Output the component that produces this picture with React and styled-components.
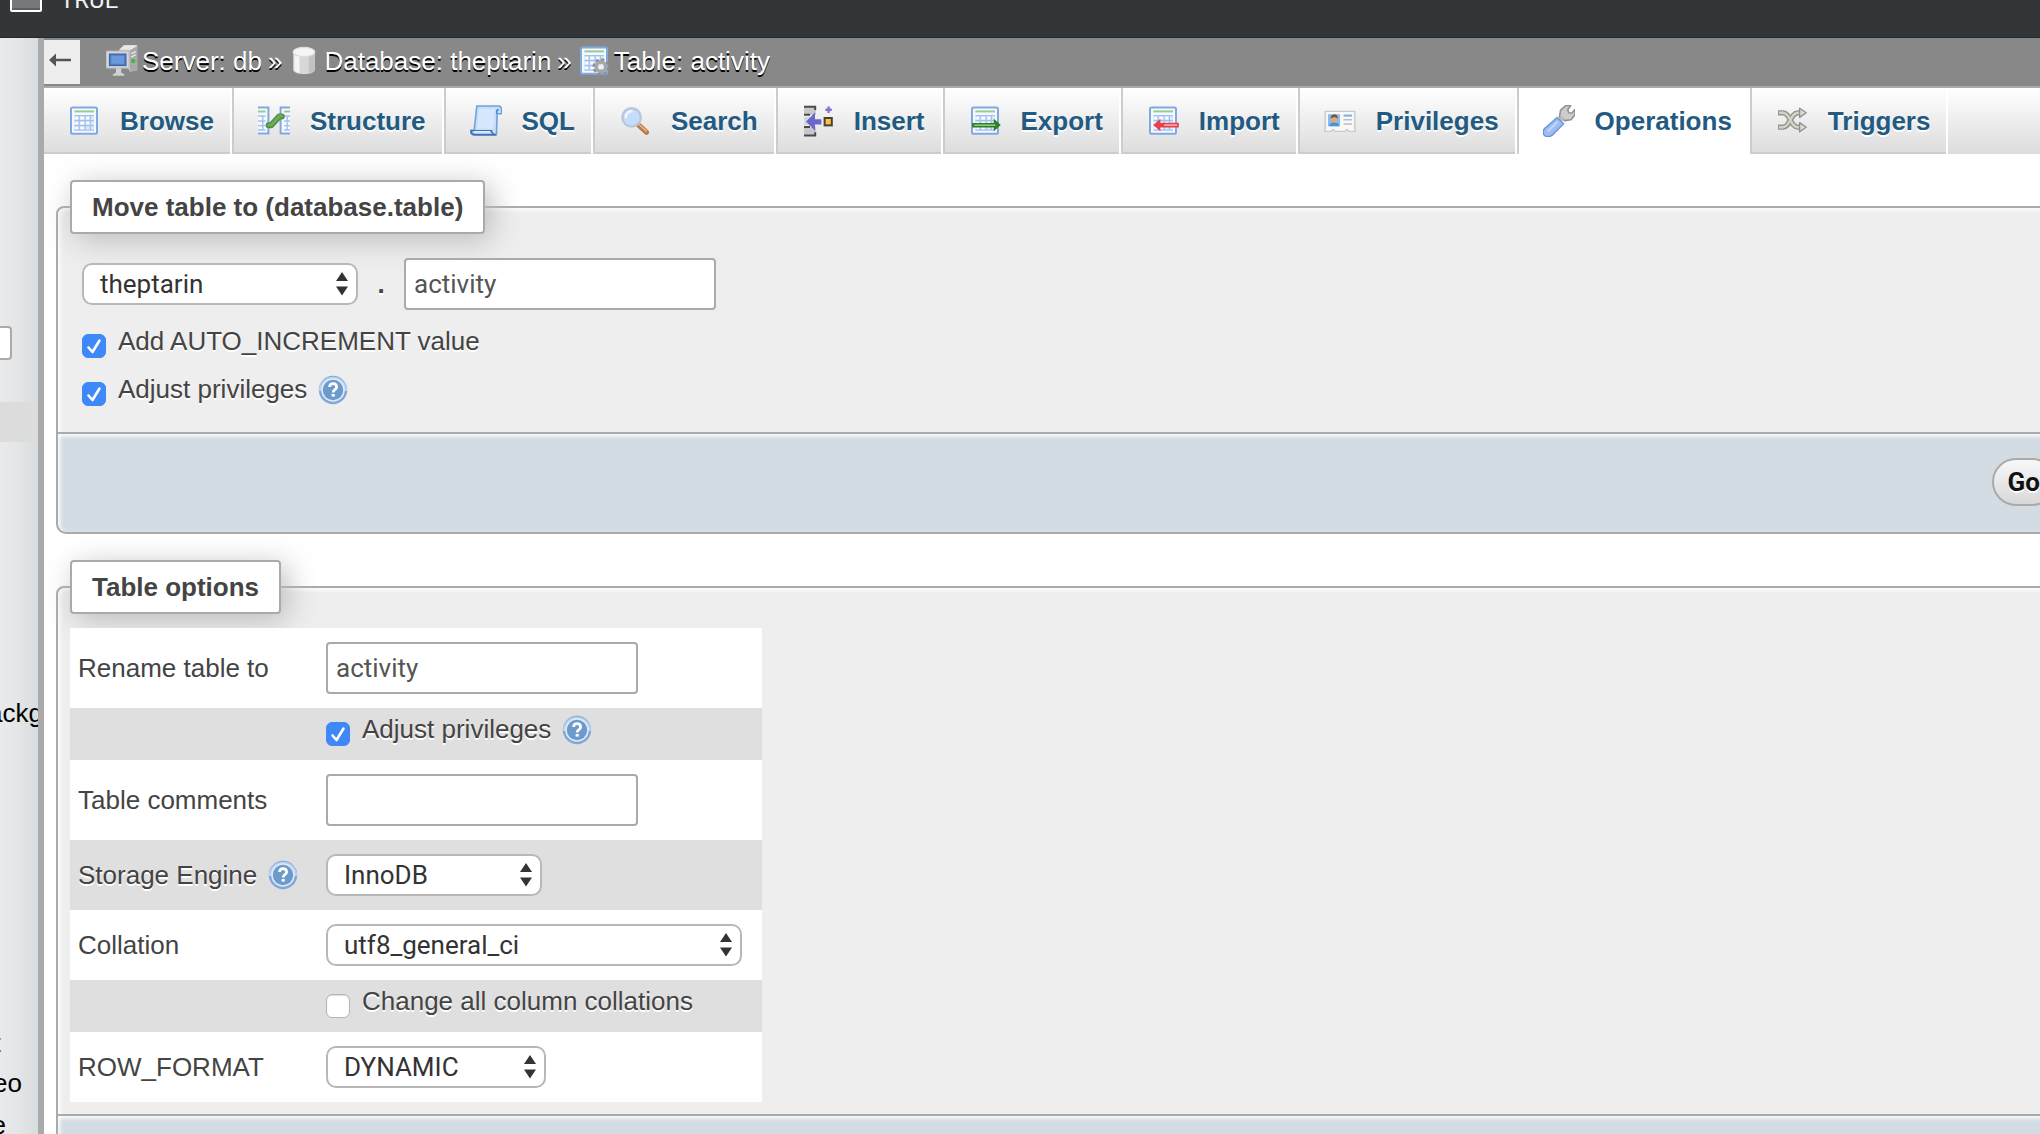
import React, { useState } from "react";
import styled, { createGlobalStyle, css } from "styled-components";

const sans = `"Liberation Sans", Arial, Helvetica, sans-serif`;
const control = `Roboto, "Liberation Sans", Arial, sans-serif`;

const GlobalStyle = createGlobalStyle`
  *, *::before, *::after { box-sizing: border-box; }
  body { margin: 0; background: #fff; color: #444; font: 26px/30px ${sans}; }
`;

const Page = styled.div`
  display: flex;
  flex-direction: column;
  height: 100vh;
  overflow: hidden;
`;

const BookmarksBar = styled.header`
  flex: none;
  display: flex;
  align-items: flex-end;
  height: 38px;
  padding: 0 10px 25px;
  overflow: hidden;
  background: #323639;
  border-bottom: 1px solid #25282a;
`;

const BookmarkLabel = styled.label`
  display: flex;
  align-items: flex-end;
  gap: 18px;
  color: #f1f2f2;
  font: 24px/24px ${control};
`;

const BookmarkBox = styled.input`
  appearance: none;
  flex: none;
  width: 32px;
  height: 32px;
  margin: 0;
  border: 2px solid #fff;
  border-radius: 2px;
  background: linear-gradient(#75797c 26px, #5b5f62 26px);
`;

const Body = styled.div`
  flex: 1;
  display: flex;
  min-height: 0;
`;

const Sidebar = styled.nav`
  flex: none;
  display: flex;
  flex-direction: column;
  width: 44px;
  padding-top: 288px;
  overflow: hidden;
  border-right: 6px solid #aaa;
  background: linear-gradient(to right, #e8eaec, #e3e5e6 50%, #d8dddf);
  color: #000;
`;

const SidebarFilter = styled.input`
  flex: none;
  width: 12px;
  height: 34px;
  padding: 0;
  border: 2px solid #aaa;
  border-left: 0;
  border-radius: 0 4px 4px 0;
  background: #fff;
`;

const SidebarHighlight = styled.div`
  flex: none;
  height: 40px;
  margin: 42px 0 256px;
  background: linear-gradient(to right, #dcdcdc 60%, #dadddf);
`;

const TreeItem = styled.a`
  flex: none;
  display: flex;
  justify-content: ${(p) => (p.$start ? "flex-start" : "flex-end")};
  margin-left: ${(p) => (p.$start ? "-12px" : "-20px")};
  padding-right: ${(p) => p.$end || 0}px;
  margin-bottom: ${(p) => p.$after || 0}px;
  color: ${(p) => (p.$muted ? "#666" : "#000")};
  line-height: 30px;
  text-decoration: none;
`;

const Main = styled.main`
  flex: 1;
  min-width: 0;
  overflow: hidden;
`;

const Breadcrumb = styled.div`
  display: flex;
  align-items: center;
  height: 50px;
  padding-bottom: 2px;
  background: #888;
  border-bottom: 2px solid #aaa;
  color: #fff;
  text-shadow: 0 2px 0 #000;
`;

const BackButton = styled.button`
  display: flex;
  align-items: center;
  justify-content: center;
  width: 36px;
  height: 44px;
  margin: 2px 26px 0 0;
  padding: 0 4px 4px 0;
  border: 0;
  background: #eee;
`;

const Crumb = styled.a`
  display: flex;
  align-items: center;
  gap: 4px;
  color: inherit;
  text-decoration: none;
`;

const Separator = styled.span`
  margin: 0 6px;
`;

const Icon = styled.svg`
  flex: none;
  display: block;
  width: 32px;
  height: 32px;
`;

const raised = css`
  background: linear-gradient(#fff, #dcdcdc);
`;

const Tabs = styled.nav`
  display: flex;
  height: 66px;
  ${raised}
`;

const Tab = styled.a`
  display: flex;
  align-items: center;
  gap: 20px;
  padding: 0 16px 0 24px;
  border-right: 2px solid #fff;
  box-shadow: ${(p) => (p.$active ? "none" : "inset 0 -2px 0 #ccc")};
  color: #235a81;
  font-weight: bold;
  text-decoration: none;
  text-shadow: 0 2px 0 #fff;
  ${(p) => p.$active && css`background: #fff;`}

  & + & {
    border-left: 2px solid #ccc;
  }
`;

const Panels = styled.div`
  display: flex;
  flex-direction: column;
  gap: 26px;
  margin-right: -32px;
  padding: 26px 0 26px 12px;
`;

const Fieldset = styled.fieldset`
  min-width: 0;
  margin: 0;
  padding: ${(p) => (p.$table ? "14px 12px 12px" : "24px 24px 10px")};
  border: 2px solid #aaa;
  border-radius: 8px 8px 0 0;
  background: #eee;
  box-shadow: inset 2px 2px 4px #fff;
  text-shadow: 0 2px 0 #fff;
`;

const Legend = styled.legend`
  margin-left: ${(p) => (p.$table ? 0 : -12)}px;
  padding: 10px 20px;
  border: 2px solid #aaa;
  border-radius: 4px;
  background: #fff;
  box-shadow: 6px 6px 30px #bbb;
  font-weight: bold;
`;

const Footer = styled.div`
  display: flex;
  justify-content: flex-end;
  padding: 24px 14px 26px;
  border: 2px solid #aaa;
  border-top: 0;
  border-radius: 0 0 10px 10px;
  background: #d3dce3;
  box-shadow: inset 2px 2px 4px #fff;
`;

const GoButton = styled.button`
  height: 48px;
  padding: 0 14px;
  border: 2px solid #aaa;
  border-radius: 24px;
  background: linear-gradient(#f8f8f8, #d8d8d8);
  color: #111;
  font: bold 26px/30px ${control};
  text-shadow: 0 2px 0 #fff;
`;

const MoveTarget = styled.div`
  display: flex;
  align-items: center;
  margin-bottom: 16px;
`;

const Dot = styled.b`
  width: 46px;
  text-align: center;
`;

const TextInput = styled.input`
  display: block;
  width: 312px;
  height: 52px;
  padding: 0 8px;
  border: 2px solid #aaa;
  border-radius: 4px;
  background: #fff;
  color: #555;
  font: 26px/30px ${control};
`;

const SelectBox = styled.span`
  position: relative;
  display: block;
  width: ${(p) => p.$width}px;
`;

const NativeSelect = styled.select`
  appearance: none;
  display: block;
  width: 100%;
  height: 42px;
  padding: 0 32px 0 16px;
  border: 2px solid #b8b8b8;
  border-radius: 10px;
  background: #fff;
  color: #333;
  font: 26px/30px ${control};
`;

const SelectArrows = styled.svg`
  position: absolute;
  top: 9px;
  right: 10px;
  width: 12px;
  height: 24px;
  pointer-events: none;
`;

const CheckRow = styled.div`
  display: flex;
  align-items: flex-start;
  height: ${(p) => (p.$table ? 46 : 48)}px;
`;

const CheckBox = styled.span`
  position: relative;
  flex: none;
  width: 24px;
  height: 24px;
  margin: 8px 12px 0 0;
`;

const CheckInput = styled.input`
  appearance: none;
  display: block;
  width: 24px;
  height: 24px;
  margin: 0;
  border: 1px solid #b4b4b4;
  border-radius: 6px;
  background: #fff;
  box-shadow: inset 0 1px 1px #ddd;

  &:checked {
    border-color: #3f88f7;
    background: #3f88f7;
    box-shadow: none;
  }

  & + svg {
    display: none;
  }

  &:checked + svg {
    display: block;
  }
`;

const CheckMark = styled.svg`
  position: absolute;
  inset: 0;
  width: 24px;
  height: 24px;
  pointer-events: none;
`;

const HelpLink = styled.a`
  display: block;
  flex: none;
  margin-left: 10px;
`;

const Options = styled.table`
  width: 692px;
  border-collapse: collapse;
`;

const OptionRow = styled.tr`
  background: #fff;

  &:nth-child(even) {
    background: #dfdfdf;
  }
`;

const NameCell = styled.th`
  width: 248px;
  padding: 0 0 0 8px;
  font-weight: normal;
  text-align: left;
`;

const NameLine = styled.span`
  display: flex;
  align-items: center;
`;

const ControlCell = styled.td`
  padding: ${(p) => (p.$check ? "6px 8px 0" : "14px 8px")};
`;

/* ---------- icons ---------- */

const Sheet = ({ children }) => (
  <>
    <rect x="1.5" y="1.2" width="13" height="13.2" rx="0.8" fill="#f4f9ff" stroke="#82a9de" />
    <path d="M3.2 3.2h9.800" stroke="#9acb8c" strokeWidth="1" />
    <path d="M3.2 5.6h9.8v7H3.2z" fill="#dbe8fa" />
    <path d="M5.6 5.3v7.5M8.6 5.3v7.5M11.2 5.3v7.5M3.2 5.3h9.8M3.2 7.8h9.8M3.2 10.3h9.8M3.2 12.6h9.8" stroke="#a3c1ed" strokeWidth=".6" />
    <path d="M3.8 6.5h1.2M6.3 6.5h1.6M9.2 6.5h1.4M3.8 9h1.2M6.3 9h1.6M9.2 9h1.4M3.8 11.5h1.2M6.3 11.5h1.6" stroke="#fff" strokeWidth=".9" />
    {children}
  </>
);

const icons = {
  server: (
    <>
      <path d="M6.5 2.5L9 0h6.6v12.6L12 13.4z" fill="#cfcfcf" />
      <path d="M9 .2h6.4l-2.4 2H6.7z" fill="#e9e9e9" />
      <path d="M12 2.6L15.6.6v12L12 13.2z" fill="#a9a9a9" />
      <path d="M12.6 4.4l2.3-1.1M12.6 6l2.3-1.1" stroke="#eee" strokeWidth=".6" />
      <circle cx="13.6" cy="8" r="1.1" fill="#49b449" />
      <rect x="0" y="3" width="11.6" height="8.6" rx=".6" fill="#d6d6d6" stroke="#b0b0b0" strokeWidth=".5" />
      <rect x="1.7" y="4.5" width="8.3" height="5.8" fill="#4a7cc4" stroke="#3262a8" strokeWidth=".5" />
      <rect x="2.6" y="5.3" width="6.5" height="4.1" fill="#6a98da" />
      <path d="M5 11.6h2.6v2.2l1.6 1v.6H3.4v-.6l1.6-1z" fill="#d0d0d0" />
    </>
  ),
  database: (
    <>
      <path d="M2.6 3.4v9c0 1.4 2.4 2.2 5.4 2.2s5.4-.8 5.4-2.2v-9z" fill="#d7d7d7" />
      <path d="M3.2 4v8.6c.6.8 1.6 1.2 2.6 1.4V5z" fill="#f4f4f4" />
      <path d="M10.4 5v9c1.4-.2 2.4-.7 2.8-1.5V4z" fill="#c2c2c2" />
      <ellipse cx="8" cy="3.5" rx="5.4" ry="2.3" fill="#f6f6f6" stroke="#ddd" strokeWidth=".6" />
    </>
  ),
  table: (
    <Sheet>
      <circle cx="11.5" cy="10.9" r="3.5" fill="none" stroke="#8f8f8f" strokeWidth="1.5" strokeDasharray="1.5 1.25" />
      <circle cx="11.5" cy="10.9" r="2.4" fill="none" stroke="#a6a6a6" strokeWidth="1.7" />
      <circle cx="11.5" cy="10.9" r="1.2" fill="#f2f2f2" />
    </Sheet>
  ),
  browse: <Sheet />,
  structure: (
    <>
      <path d="M0 1.3h5.2v12.9H0" fill="#f4f9ff" stroke="#82a9de" />
      <path d="M16 1.3h-4.7v12.9H16" fill="#f4f9ff" stroke="#82a9de" />
      <path d="M0 3.2h3.8M13 3.2h3" stroke="#9acb8c" />
      <path d="M0 5.5h3.8M0 8h3.8M0 10.3h3.8M0 12.5h3.8M2.4 5.5v7M13 5.5h3M13 8h3M13 10.3h3M13 12.5h3M14.6 5.5v7" stroke="#a3c1ed" strokeWidth=".7" />
      <path d="M5.300 10.100h1.300l4-4.400h1.300" fill="none" stroke="#4c8d41" strokeWidth="3" strokeLinecap="round" strokeLinejoin="round" />
      <path d="M5.300 10h1.400l4-4.400h1.200" fill="none" stroke="#6bab5d" strokeWidth="1.600" strokeLinecap="round" strokeLinejoin="round" />
    </>
  ),
  sql: (
    <>
      <path d="M3.4.5h10.8c1.2 0 1.6 1 1.6 2.2v1.7h-2.2L13.2 15H2.4c-1.4 0-2.2-.8-2.2-2.3h1.9z" fill="#c6defa" stroke="#6ea2dc" strokeWidth=".8" strokeLinejoin="round" />
      <path d="M4.4 2h8l-.9 9.8H3.6z" fill="#d6e8fd" />
      <path d="M13.4 4.4c-.2-1 .1-2 .9-2.2" fill="none" stroke="#4a87cc" strokeWidth=".8" />
      <path d="M.5 12.800h10.300c0 1.100.6 1.900 2.200 2.100H2.600C1.300 14.900.6 14 .5 12.800z" fill="#a8cbf3" stroke="#3f6fae" strokeWidth=".7" />
      <path d="M2 13.400h8" stroke="#fff" strokeWidth=".6" />
    </>
  ),
  search: (
    <>
      <path d="M10 10.200l3.700 3.400" stroke="#b87942" strokeWidth="2.600" strokeLinecap="round" />
      <path d="M10.200 9.900l3.400 3.100" stroke="#e2b27c" strokeWidth=".9" strokeLinecap="round" />
      <circle cx="6.300" cy="6.200" r="4.600" fill="#c6dcfb" stroke="#b9c6dc" strokeWidth="1.200" />
      <path d="M3.400 6c0-1.700 1.200-2.900 2.800-2.900" fill="none" stroke="#eff6ff" strokeWidth="1.300" strokeLinecap="round" />
    </>
  ),
  insert: (
    <>
      <path d="M1 1h6v4H1zM1 11h6v4.500H1z" fill="#c8c8c8" />
      <path d="M1 6h3v4H1z" fill="#d8d8d8" />
      <path d="M1 .9h5.600v1.600M1 4.900h3M1 11h3M1 15.200h5.600v-1.600" fill="none" stroke="#4a4a4a" strokeWidth="1" />
      <path d="M2 8.300L6.500 3.800v3.300H9.700v2.600H6.500v3.200z" fill="#6a68cc" />
      <rect x="11.300" y="6.500" width="3.600" height="3.700" fill="#f8c53c" stroke="#4a4035" strokeWidth="1" />
      <path d="M13.300.8v3.200M11.700 2.400h3.200" stroke="#7a78d4" strokeWidth="1.200" />
    </>
  ),
  export: (
    <Sheet>
      <path d="M1.600 9h10.800V6.900L15.900 10l-3.500 3.100V11.200H1.600z" fill="#2f7d2a" />
      <path d="M2.600 10.100h10.600" stroke="#8fce79" strokeWidth=".8" />
    </Sheet>
  ),
  import: (
    <Sheet>
      <path d="M15.900 8.900H6.700V6.900L3.100 10l3.600 3.100v-1.900h9.200z" fill="#e5414a" />
      <path d="M8.600 10.050h6.400" stroke="#ff9ea3" strokeWidth=".9" />
    </Sheet>
  ),
  privileges: (
    <>
      <path d="M.6 3.200h14.800v10h-3l-1-1-1 1H5.600l-1-1-1 1h-3z" fill="#f8f8f8" stroke="#c9c9c9" strokeWidth=".7" />
      <rect x="2" y="4.600" width="6" height="6" fill="#84bdf4" />
      <path d="M2.600 10.600c.2-1.500 1.200-2 2.500-2s2.300.5 2.500 2z" fill="#4f8fd8" />
      <circle cx="5.100" cy="7.100" r="1.700" fill="#dfa97a" />
      <path d="M3.400 6.900c-.1-1.700.7-2.200 1.800-2.200s1.900.7 1.600 2.200c-.7-.9-2.300-1-3.400 0z" fill="#7a5530" />
      <path d="M9.800 5.300H14" stroke="#6fb2f2" strokeWidth="1" />
      <path d="M9.800 7.400H14M9.800 9.500H14" stroke="#bdbdbd" strokeWidth=".8" />
    </>
  ),
  operations: (
    <>
      <path d="M8.200 5.900l.6-3.300L11.200.4l2.700-.3-1.600 2.400.7 1.400 1.400.2 1.500-1.800.1 2.600-2 2.500-3.200.4z" fill="#cdcdcd" stroke="#929292" strokeWidth=".8" strokeLinejoin="round" />
      <path d="M7.200 7.200l2.200-1.900 1.300 1.500-1.800 2z" fill="#bababa" />
      <path d="M7.100 6.200l3.200 3.200-5.400 5.500c-.8.800-2 1-3 .9-1-.2-1.700-.9-1.800-1.900-.1-.9.100-1.600.8-2.300z" fill="#9dbdf0" stroke="#6f95d8" strokeWidth=".7" />
      <path d="M7.300 8.300l-4.900 4.900" stroke="#c3d8f9" strokeWidth="1" />
    </>
  ),
  triggers: (
    <>
      <path d="M1 3.900h2.600c3.400 0 3.600 7.200 7.400 7.200h1.600M1 11.100h2.600c3.400 0 3.600-7.200 7.400-7.200h1.600" fill="none" stroke="#94948d" strokeWidth="2.600" />
      <path d="M1.500 3.900h2.100c3.400 0 3.600 7.200 7.400 7.200h1.600M1.500 11.100h2.100c3.400 0 3.600-7.200 7.400-7.200h1.600" fill="none" stroke="#d2d2cb" strokeWidth="1.200" />
      <path d="M11.800 1.600l3.300 2.300-3.300 2.300zM11.800 8.800l3.300 2.300-3.300 2.300z" fill="#dcdcd6" stroke="#92928b" strokeWidth=".7" strokeLinejoin="round" />
    </>
  ),
  help: (
    <>
      <circle cx="8" cy="8" r="7.100" fill="#7fa8d8" />
      <path d="M.9 8.500a7.100 7.100 0 0 1 14.200 0z" fill="#b9d2ee" />
      <circle cx="8" cy="8" r="5.900" fill="#dfeaf7" />
      <circle cx="8" cy="8" r="5.100" fill="#6b9acb" />
      <path d="M6.300 6.500c0-2.200 3.500-2.200 3.500 0 0 1.400-1.700 1.200-1.700 2.700" fill="none" stroke="#fff" strokeWidth="1.400" />
      <rect x="7.300" y="10" width="1.600" height="1.300" fill="#fff" />
    </>
  ),
};

const Glyph = ({ name }) => (
  <Icon viewBox="0 0 16 16" aria-hidden="true">{icons[name]}</Icon>
);

/* ---------- controls ---------- */

const Help = () => (
  <HelpLink href="#help" aria-label="Documentation">
    <Glyph name="help" />
  </HelpLink>
);

const Select = ({ id, width, value, label }) => (
  <SelectBox $width={width}>
    <NativeSelect id={id} defaultValue={value} aria-label={label}>
      <option value={value}>{value}</option>
    </NativeSelect>
    <SelectArrows viewBox="0 0 12 24" aria-hidden="true">
      <path d="M6 0l6 9H0zM6 23.500l6-9H0z" fill="#333" />
    </SelectArrows>
  </SelectBox>
);

const Check = ({ id, label, on, help, table }) => {
  const [checked, setChecked] = useState(Boolean(on));
  return (
    <CheckRow $table={table}>
      <CheckBox>
        <CheckInput id={id} type="checkbox" checked={checked} onChange={() => setChecked(!checked)} />
        <CheckMark viewBox="0 0 24 24" aria-hidden="true">
          <path d="M6.500 13.500l4 4.500L17.500 6.500" fill="none" stroke="#fff" strokeWidth="2.600" strokeLinecap="round" strokeLinejoin="round" />
        </CheckMark>
      </CheckBox>
      <label htmlFor={id}>{label}</label>
      {help && <Help />}
    </CheckRow>
  );
};

const Option = ({ id, name, help, children }) => (
  <OptionRow>
    <NameCell scope="row">
      <NameLine>
        <label htmlFor={id}>{name}</label>
        {help && <Help />}
      </NameLine>
    </NameCell>
    <ControlCell>{children}</ControlCell>
  </OptionRow>
);

const CheckOption = (props) => (
  <OptionRow>
    <NameCell as="td" />
    <ControlCell $check>
      <Check table {...props} />
    </ControlCell>
  </OptionRow>
);

const tabs = [
  ["browse", "Browse"],
  ["structure", "Structure"],
  ["sql", "SQL"],
  ["search", "Search"],
  ["insert", "Insert"],
  ["export", "Export"],
  ["import", "Import"],
  ["privileges", "Privileges"],
  ["operations", "Operations"],
  ["triggers", "Triggers"],
];

const crumbs = [
  ["server", "Server: db"],
  ["database", "Database: theptarin"],
  ["table", "Table: activity"],
];

export default function App() {
  return (
    <Page>
      <GlobalStyle />
      <BookmarksBar>
        <BookmarkLabel>
          <BookmarkBox type="checkbox" />
          TRUE
        </BookmarkLabel>
      </BookmarksBar>
      <Body>
        <Sidebar>
          <SidebarFilter type="text" aria-label="Filter" />
          <SidebarHighlight />
          <TreeItem href="#ackg" $start $after={300}>ackg</TreeItem>
          <TreeItem href="#t" $end={37} $after={10} $muted>t</TreeItem>
          <TreeItem href="#eo" $end={16} $after={12}>eo</TreeItem>
          <TreeItem href="#e" $end={32}>e</TreeItem>
        </Sidebar>
        <Main>
          <Breadcrumb>
            <BackButton type="button" aria-label="Back">
              <svg width="22" height="14" viewBox="0 0 22 14" aria-hidden="true">
                <path d="M0 7l7-6.500v5.300h15v2.400H7v5.300z" fill="#555" />
              </svg>
            </BackButton>
            {crumbs.map(([icon, text], i) => (
              <React.Fragment key={icon}>
                {i > 0 && <Separator>»</Separator>}
                <Crumb href={`#${icon}`}>
                  <Glyph name={icon} />
                  {text}
                </Crumb>
              </React.Fragment>
            ))}
          </Breadcrumb>
          <Tabs>
            {tabs.map(([icon, text]) => (
              <Tab key={icon} href={`#${icon}`} $active={icon === "operations"}>
                <Glyph name={icon} />
                {text}
              </Tab>
            ))}
          </Tabs>
          <Panels>
            <form onSubmit={(e) => e.preventDefault()}>
              <Fieldset>
                <Legend>Move table to (database.table)</Legend>
                <MoveTarget>
                  <Select id="target-db" width={276} value="theptarin" label="Target database" />
                  <Dot>.</Dot>
                  <TextInput type="text" defaultValue="activity" aria-label="Target table" />
                </MoveTarget>
                <Check id="auto-increment" label="Add AUTO_INCREMENT value" on />
                <Check id="move-privileges" label="Adjust privileges" on help />
              </Fieldset>
              <Footer>
                <GoButton type="submit">Go</GoButton>
              </Footer>
            </form>
            <form onSubmit={(e) => e.preventDefault()}>
              <Fieldset $table>
                <Legend $table>Table options</Legend>
                <Options>
                  <tbody>
                    <Option id="rename" name="Rename table to">
                      <TextInput id="rename" type="text" defaultValue="activity" />
                    </Option>
                    <CheckOption id="rename-privileges" label="Adjust privileges" on help />
                    <Option id="comments" name="Table comments">
                      <TextInput id="comments" type="text" />
                    </Option>
                    <Option id="engine" name="Storage Engine" help>
                      <Select id="engine" width={216} value="InnoDB" />
                    </Option>
                    <Option id="collation" name="Collation">
                      <Select id="collation" width={416} value="utf8_general_ci" />
                    </Option>
                    <CheckOption id="all-collations" label="Change all column collations" />
                    <Option id="row-format" name="ROW_FORMAT">
                      <Select id="row-format" width={220} value="DYNAMIC" />
                    </Option>
                  </tbody>
                </Options>
              </Fieldset>
              <Footer>
                <GoButton type="submit">Go</GoButton>
              </Footer>
            </form>
          </Panels>
        </Main>
      </Body>
    </Page>
  );
}
